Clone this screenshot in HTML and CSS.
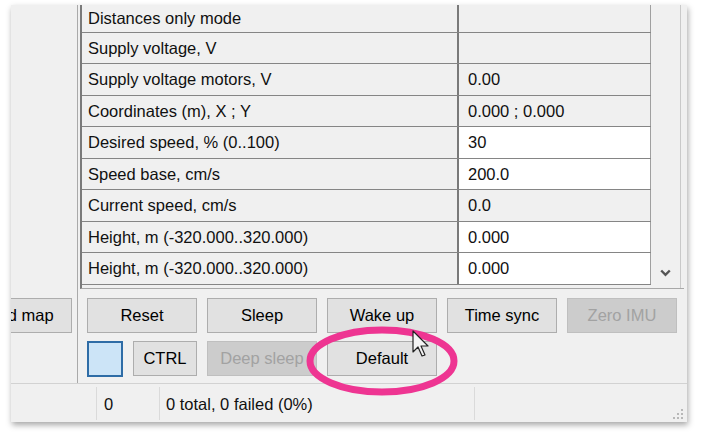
FILE: index.html
```html
<!DOCTYPE html>
<html>
<head>
<meta charset="utf-8">
<link rel="stylesheet" href="styles.css">
</head>
<body>
<div class="window">
  <div class="main">
    <div class="left">
      <div class="btn clipped">Load map</div>
    </div>
    <div class="right">
      <div class="grid">
        <div class="cells">
          <div class="row first"><div class="name">Distances only mode</div><div class="val"></div></div>
          <div class="row"><div class="name">Supply voltage, V</div><div class="val"></div></div>
          <div class="row"><div class="name">Supply voltage motors, V</div><div class="val">0.00</div></div>
          <div class="row"><div class="name">Coordinates (m), X ; Y</div><div class="val">0.000 ; 0.000</div></div>
          <div class="row"><div class="name">Desired speed, % (0..100)</div><div class="val edit">30</div></div>
          <div class="row"><div class="name">Speed base, cm/s</div><div class="val edit">200.0</div></div>
          <div class="row"><div class="name">Current speed, cm/s</div><div class="val">0.0</div></div>
          <div class="row"><div class="name">Height, m (-320.000..320.000)</div><div class="val edit">0.000</div></div>
          <div class="row"><div class="name">Height, m (-320.000..320.000)</div><div class="val edit">0.000</div></div>
        </div>
        <div class="scroll">
          <svg class="chev" width="11" height="8" viewBox="0 0 11 8"><polyline points="1.2,1.5 5.5,5.8 9.8,1.5" fill="none" stroke="#555" stroke-width="2.4"/></svg>
        </div>
      </div>
      <div class="buttons">
        <div class="btn-row">
          <div class="btn">Reset</div>
          <div class="btn">Sleep</div>
          <div class="btn">Wake up</div>
          <div class="btn">Time sync</div>
          <div class="btn disabled">Zero IMU</div>
        </div>
        <div class="btn-row">
          <div class="swatch"></div>
          <div class="btn small">CTRL</div>
          <div class="btn disabled">Deep sleep</div>
          <div class="btn">Default</div>
        </div>
      </div>
    </div>
  </div>
  <div class="status">
    <div class="sec s1"></div>
    <div class="sec s2">0</div>
    <div class="sec s3">0 total, 0 failed (0%)</div>
    <div class="sec s4">
      <svg class="grip" width="12" height="12" viewBox="0 0 12 12">
        <rect x="9" y="1" width="2" height="2" fill="#b8b8b8"/>
        <rect x="5" y="5" width="2" height="2" fill="#b8b8b8"/>
        <rect x="9" y="5" width="2" height="2" fill="#b8b8b8"/>
        <rect x="1" y="9" width="2" height="2" fill="#b8b8b8"/>
        <rect x="5" y="9" width="2" height="2" fill="#b8b8b8"/>
        <rect x="9" y="9" width="2" height="2" fill="#b8b8b8"/>
      </svg>
    </div>
  </div>
</div>
<svg class="overlay" width="704" height="440" viewBox="0 0 704 440">
  <ellipse cx="382" cy="361" rx="72" ry="31" fill="none" stroke="#ee3592" stroke-width="7"/>
  <path d="M413 331 L413 352 L418 347 L422 356 L425 355 L421 346 L428 346 Z" fill="#f4f4f4" stroke="#222" stroke-width="1.2" stroke-linejoin="round"/>
</svg>
</body>
</html>
```

FILE: styles.css
```css
* { box-sizing: border-box; }
html, body { margin: 0; padding: 0; background: #fff; }
body {
  width: 704px;
  height: 440px;
  position: relative;
  overflow: hidden;
  font-family: "Liberation Sans", Arial, sans-serif;
  font-size: 16.5px;
  color: #111;
}
.window {
  margin: 5px 0 0 11px;
  width: 676px;
  height: 417px;
  background: #f0f0f0;
  display: flex;
  flex-direction: column;
  box-shadow: 1px 3px 6px rgba(0,0,0,0.35);
}
.main {
  display: flex;
  height: 378px;
}
.left {
  width: 67px;
  border-right: 1px solid #a9a9a9;
  overflow: hidden;
  padding-top: 293px;
  display: flex;
  flex-direction: column;
}
.right {
  flex: 1;
  display: flex;
  flex-direction: column;
}
.grid {
  margin-left: 2px;
  width: 604px;
  height: 284px;
  display: flex;
  border-left: 2px solid #7a7a7a;
  border-bottom: 1px solid #a8a8a8;
}
.cells {
  display: flex;
  flex-direction: column;
}
.row {
  display: flex;
  height: 31px;
  border-bottom: 1px solid #858585;
}
.row:nth-child(odd) { height: 32px; }
.row.first { height: 28px; }
.name {
  width: 377px;
  border-right: 2px solid #7a7a7a;
  padding-left: 6px;
  display: flex;
  align-items: center;
  white-space: nowrap;
}
.val {
  width: 192px;
  border-right: 1px solid #a0a0a0;
  padding-left: 9px;
  display: flex;
  align-items: center;
}
.val.edit { background: #fff; }
.scroll {
  width: 30px;
  border-right: 1px solid #c9c9c9;
  display: flex;
  flex-direction: column;
  justify-content: flex-end;
  align-items: center;
  padding-bottom: 11px;
}
.buttons {
  padding: 9px 0 0 9px;
  display: flex;
  flex-direction: column;
  gap: 8px;
}
.btn-row {
  display: flex;
  gap: 10px;
  height: 35px;
}
.btn {
  width: 110px;
  height: 35px;
  flex-shrink: 0;
  background: #e1e1e1;
  border: 1px solid #adadad;
  display: flex;
  align-items: center;
  justify-content: center;
  color: #000;
  white-space: nowrap;
}
.btn.small { width: 64px; }
.btn.disabled {
  background: #cccccc;
  border-color: #bfbfbf;
  color: #a2a2a2;
}
.btn.clipped { margin-left: -49px; }
.swatch {
  width: 36px;
  height: 36px;
  background: #cce4f7;
  border: 2px solid #2e6ca6;
}
.status {
  height: 39px;
  border-top: 1px solid #d2d2d2;
  display: flex;
  align-items: stretch;
}
.sec {
  display: flex;
  align-items: center;
  padding-top: 4px;
  white-space: nowrap;
}
.s1 { width: 85px; }
.s2 { width: 63px; border-left: 1px solid #dadada; padding-left: 7px; margin: 3px 0 2px; padding-top: 1px; }
.s3 { width: 315px; border-left: 1px solid #dadada; padding-left: 6px; margin: 3px 0 2px; padding-top: 1px; }
.s4 { flex: 1; border-left: 1px solid #dadada; margin: 3px 0 2px; justify-content: flex-end; align-items: flex-end; padding: 0 3px 0 0; }
.grip { display: block; }
.overlay {
  position: absolute;
  left: 0;
  top: 0;
  pointer-events: none;
}
```
